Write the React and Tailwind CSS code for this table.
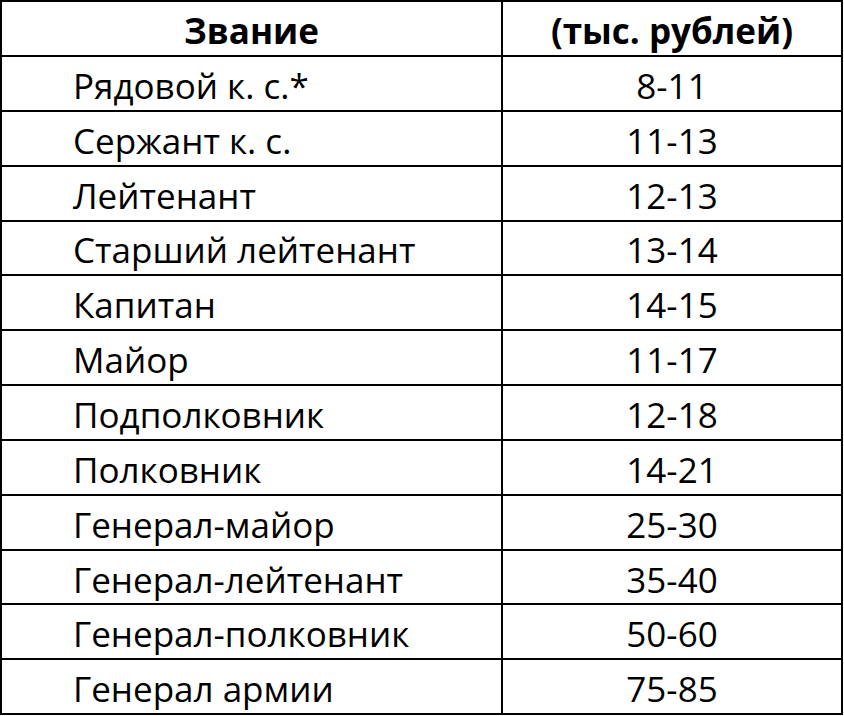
const rows = [
  ["Рядовой к. с.*", "8-11"],
  ["Сержант к. с.", "11-13"],
  ["Лейтенант", "12-13"],
  ["Старший лейтенант", "13-14"],
  ["Капитан", "14-15"],
  ["Майор", "11-17"],
  ["Подполковник", "12-18"],
  ["Полковник", "14-21"],
  ["Генерал-майор", "25-30"],
  ["Генерал-лейтенант", "35-40"],
  ["Генерал-полковник", "50-60"],
  ["Генерал армии", "75-85"],
];

export default function App() {
  return (
    <div className="w-[844px] h-[716px] bg-white text-black font-['Open_Sans',sans-serif]">
      <div className="w-[843px] border-t-2 border-l-2 border-r-2 border-black">
        <div className="flex h-[55px] border-b-2 border-black text-[35px] font-bold leading-none">
          <div className="w-[501px] flex items-center justify-center border-r-2 border-black pt-[3px]">
            Звание
          </div>
          <div className="flex-1 flex items-center justify-center pt-[3px]">(тыс. рублей)</div>
        </div>
        {rows.map(([rank, pay]) => (
          <div key={rank} className="flex h-[54.85px] border-b-2 border-black text-[35px] leading-none">
            <div className="w-[501px] flex items-center pl-[71px] border-r-2 border-black pt-[4px]">
              {rank}
            </div>
            <div className="flex-1 flex items-center justify-center pt-[4px]">{pay}</div>
          </div>
        ))}
      </div>
    </div>
  );
}
